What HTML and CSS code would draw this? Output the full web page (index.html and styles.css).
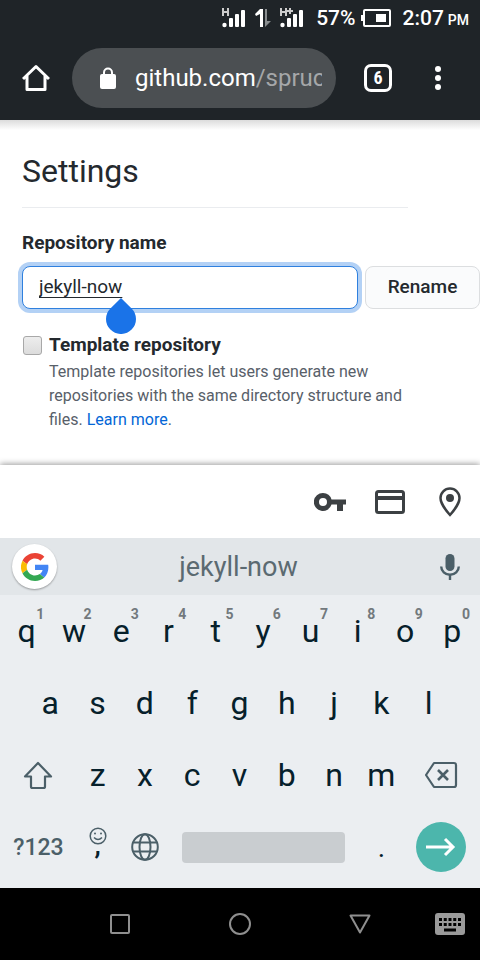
FILE: index.html
```html
<!DOCTYPE html>
<html lang="en">
<head>
<meta charset="utf-8">
<meta name="viewport" content="width=device-width, initial-scale=1">
<title>Settings</title>
<link rel="stylesheet" href="styles.css">
</head>
<body>
<div class="status">
  <svg width="24" height="20" viewBox="0 0 24 20" fill="#fff"><path d="M0 0h2v3h3V0h2v8H5V5H2v3H0z" fill="#ccc"/><circle cx="2.500" cy="17" r="2.200"/><rect x="7" y="10" width="4" height="9" rx="1"/><rect x="13" y="6" width="4" height="13" rx="1"/><rect x="19" y="2" width="4" height="17" rx="1"/></svg>
  <svg class="traffic" width="18" height="20" viewBox="0 0 18 20"><path d="M1 6 6 1h3v18H6V6L2 8z" fill="#fff"/><path d="M11 1h2v12h4l-6 6z" fill="#888c8e"/></svg>
  <svg width="24" height="20" viewBox="0 0 24 20" fill="#fff"><path d="M0 0h2v3h3V0h2v8H5V5H2v3H0zM9 0h2v2h2v2h-2v2H9V4H7V2h2z" fill="#ccc"/><circle cx="2.500" cy="17" r="2.200"/><rect x="7" y="10" width="4" height="9" rx="1"/><rect x="13" y="6" width="4" height="13" rx="1"/><rect x="19" y="2" width="4" height="17" rx="1"/></svg>
  <span class="percent">57%</span>
  <svg class="battery" width="30" height="18" viewBox="0 0 30 18" fill="none"><rect x="3" y="1" width="26" height="16" rx="1" stroke="#fff" stroke-width="2"/><path d="M0 6h2v6H0z" fill="#fff"/><rect x="15" y="5" width="10" height="8" fill="#fff"/></svg>
  <span class="time">2:07</span><span class="pm">PM</span>
</div>
<header class="toolbar">
  <button class="tool home" aria-label="Home"><svg width="28" height="28" viewBox="0 0 28 28" fill="none" stroke="#fff" stroke-width="3" stroke-linejoin="round"><path d="M1 15 14 2.500 27 15M5 12v13.500h18V12"/></svg></button>
  <div class="omnibox">
    <svg width="16" height="22" viewBox="0 0 16 22"><path d="M4 9V5.500a4 4 0 0 1 8 0V9" fill="none" stroke="#fff" stroke-width="2"/><rect y="7" width="16" height="15" rx="2" fill="#fff"/></svg>
    <a class="url" href="#">github.com<span class="path">/spruc</span></a>
  </div>
  <button class="tool tabs" aria-label="Tabs"><span class="count">6</span></button>
  <button class="tool more" aria-label="More"><svg width="6" height="24" viewBox="0 0 6 24" fill="#fff"><circle cx="3" cy="3" r="3"/><circle cx="3" cy="12" r="3"/><circle cx="3" cy="21" r="3"/></svg></button>
</header>
<main class="page">
  <h1>Settings</h1>
  <form>
    <label class="name-label" for="name">Repository name</label>
    <div class="rename">
      <div class="field">
        <input id="name" type="text" value="jekyll-now" spellcheck="false">
        <svg class="handle" width="30" height="36" viewBox="0 0 30 36"><path d="M15 0 25.600 10.400a15 15 0 1 1-21.200 0z" fill="#1a73e8"/></svg>
      </div>
      <button class="submit" type="button">Rename</button>
    </div>
    <div class="template">
      <input id="template" type="checkbox">
      <div>
        <label for="template">Template repository</label>
        <p>Template repositories let users generate new repositories with the same directory structure and files. <a href="#">Learn more</a>.</p>
      </div>
    </div>
  </form>
</main>
<div class="autofill">
  <button aria-label="Passwords"><svg width="32" height="20" viewBox="0 0 32 20"><path fill="#3c4043" fill-rule="evenodd" d="M9 1a9 9 0 0 1 8.500 6.500H32v5h-3V19h-6v-6.500h-5.500A9 9 0 1 1 9 1zm0 5a4 4 0 1 0 0 8 4 4 0 0 0 0-8z"/></svg></button>
  <button aria-label="Payment methods"><svg width="30" height="24" viewBox="0 0 30 24"><rect x="1.500" y="1.500" width="27" height="21" rx="2" fill="none" stroke="#3c4043" stroke-width="3"/><path d="M1 6h28v4H1z" fill="#3c4043"/></svg></button>
  <button aria-label="Addresses"><svg width="22" height="30" viewBox="0 0 22 30"><path d="M11 1.500A9.500 9.500 0 0 0 1.500 11c0 6.500 9.500 17 9.500 17s9.500-10.500 9.500-17A9.500 9.500 0 0 0 11 1.500z" fill="none" stroke="#3c4043" stroke-width="2.500"/><circle cx="11" cy="11" r="4" fill="#3c4043"/></svg></button>
</div>
<section class="keyboard">
  <div class="strip">
    <button class="google" aria-label="Google"><svg width="28" height="28" viewBox="0 0 48 48"><path fill="#ea4335" d="M24 9.500c3.540 0 6.710 1.220 9.210 3.600l6.850-6.850C35.900 2.380 30.470 0 24 0 14.620 0 6.510 5.380 2.560 13.220l7.980 6.190C12.430 13.720 17.740 9.500 24 9.500z"/><path fill="#4285f4" d="M46.980 24.550c0-1.570-.15-3.090-.38-4.550H24v9.020h12.940c-.58 2.960-2.260 5.480-4.780 7.180l7.730 6c4.510-4.180 7.090-10.360 7.090-17.650z"/><path fill="#fbbc05" d="M10.530 28.590a14.500 14.500 0 0 1 0-9.180l-7.980-6.190a24 24 0 0 0 0 21.560l7.980-6.190z"/><path fill="#34a853" d="M24 48c6.480 0 11.930-2.130 15.890-5.810l-7.730-6c-2.150 1.450-4.920 2.300-8.160 2.300-6.260 0-11.570-4.220-13.470-9.910l-7.980 6.190C6.510 42.620 14.620 48 24 48z"/></svg></button>
    <button class="suggestion">jekyll-now</button>
    <button class="mic" aria-label="Voice input"><svg width="20" height="28" viewBox="0 0 20 28"><rect x="5.500" y="1" width="9" height="17" rx="4.500" fill="#4b5f68"/><path d="M1.200 13.500a8.800 8.300 0 0 0 17.600 0M10 21.500V27" fill="none" stroke="#4b5f68" stroke-width="2.400"/></svg></button>
  </div>
  <div class="keys">
    <button class="key">q<sup>1</sup></button><button class="key">w<sup>2</sup></button><button class="key">e<sup>3</sup></button><button class="key">r<sup>4</sup></button><button class="key">t<sup>5</sup></button><button class="key">y<sup>6</sup></button><button class="key">u<sup>7</sup></button><button class="key">i<sup>8</sup></button><button class="key">o<sup>9</sup></button><button class="key">p<sup>0</sup></button>
    <button class="key indent">a</button><button class="key">s</button><button class="key">d</button><button class="key">f</button><button class="key">g</button><button class="key">h</button><button class="key">j</button><button class="key">k</button><button class="key">l</button>
    <button class="key wide" aria-label="Shift"><svg width="30" height="29" viewBox="0 0 30 29"><path d="M15 2 28 15.500h-6V25.500q0 1.500-1.500 1.500h-11Q8 27 8 25.500V15.500H2z" fill="none" stroke="#4b5f68" stroke-width="2.200" stroke-linejoin="round"/></svg></button><button class="key">z</button><button class="key">x</button><button class="key">c</button><button class="key">v</button><button class="key">b</button><button class="key">n</button><button class="key">m</button><button class="key wide" aria-label="Backspace"><svg width="34" height="28" viewBox="0 0 34 28" fill="none" stroke="#4b5f68" stroke-width="2.200" stroke-linejoin="round"><path d="M10 2h20q2 0 2 2v20q0 2-2 2H10L2 14z"/><path d="m14 9 10 10M24 9 14 19" stroke-width="2.600"/></svg></button>
    <button class="key wide symbols">?123</button>
    <button class="key comma" aria-label="Comma, emoji"><svg width="18" height="18" viewBox="0 0 18 18" fill="none" stroke="#4b5f68" stroke-width="1.500"><circle cx="9" cy="9" r="7.800"/><path d="M5 10.500q4 4 8 0"/><circle cx="6" cy="6.500" r="1" fill="#4b5f68" stroke="none"/><circle cx="12" cy="6.500" r="1" fill="#4b5f68" stroke="none"/></svg><span>,</span></button>
    <button class="key" aria-label="Language"><svg width="28" height="28" viewBox="0 0 28 28" fill="none" stroke="#4b5f68" stroke-width="2"><circle cx="14" cy="14" r="12.800"/><ellipse cx="14" cy="14" rx="5.500" ry="12.800"/><path d="M2.500 9.500h23M2.500 18.500h23"/></svg></button>
    <button class="key space" aria-label="Space"><span></span></button>
    <button class="key period">.</button>
    <button class="key wide" aria-label="Go"><span class="go"><svg width="30" height="20" viewBox="0 0 30 20" fill="none" stroke="#fff" stroke-width="3"><path d="M0 10h27M19 2l8 8-8 8"/></svg></span></button>
  </div>
</section>
<nav class="system">
  <button aria-label="Overview"><svg width="20" height="20" viewBox="0 0 20 20"><rect x="1" y="1" width="18" height="18" rx="1"/></svg></button>
  <button aria-label="Home screen"><svg width="22" height="22" viewBox="0 0 22 22"><circle cx="11" cy="11" r="10"/></svg></button>
  <button aria-label="Back"><svg width="22" height="20" viewBox="0 0 22 20"><path d="M1.500 1.500h19L11 18.500z" stroke-linejoin="round"/></svg></button>
  <button class="switch" aria-label="Switch keyboard"><svg width="30" height="22" viewBox="0 0 30 22"><rect width="30" height="22" rx="3" fill="#9a9a9a" stroke="none"/><path d="M4 6.500h22M4 11.500h22" stroke="#000" stroke-width="3" stroke-dasharray="3 1.750"/><path d="M9 17h12" stroke="#000" stroke-width="3"/></svg></button>
</nav>
</body>
</html>
```
FILE: styles.css
```css
* { box-sizing: border-box; }
body {
  margin: 0;
  min-height: 100vh;
  display: flex;
  flex-direction: column;
  background: #fff;
  color: #24292e;
  font-family: Roboto, "Liberation Sans", sans-serif;
}
button {
  margin: 0;
  padding: 0;
  border: 0;
  background: none;
  color: inherit;
  font: inherit;
}
svg { display: block; flex: none; }

.status {
  height: 36px;
  padding-right: 11px;
  display: flex;
  align-items: center;
  justify-content: flex-end;
  background: #1f2428;
  color: #fff;
  font-size: 21px;
  font-weight: 500;
}
.traffic { margin: 0 8px; }
.percent { margin: 0 6px 0 12px; }
.time { margin-left: 11px; }
.pm { margin: 4px 0 0 4px; font-size: 14px; }

.toolbar {
  height: 84px;
  display: flex;
  align-items: center;
  background: #1f2428;
  color: #fff;
}
.tool { display: flex; align-items: center; justify-content: center; }
.home { width: 72px; }
.omnibox {
  flex: 1;
  min-width: 0;
  height: 60px;
  padding: 0 14px 0 28px;
  display: flex;
  align-items: center;
  gap: 19px;
  border-radius: 30px;
  background: #4b4f52;
}
.url {
  flex: 1;
  overflow: hidden;
  white-space: nowrap;
  color: #fff;
  font-size: 24px;
  line-height: 32px;
  text-decoration: none;
}
.path { color: #a5a7a9; }
.tabs { width: 84px; }
.count {
  width: 28px;
  height: 28px;
  border: 3px solid #fff;
  border-radius: 7px;
  font-family: "Roboto Condensed", "Liberation Sans Narrow", Roboto, sans-serif;
  font-size: 18px;
  font-weight: 700;
  line-height: 22px;
}
.more { width: 36px; margin-right: 24px; }

.page {
  flex: 1;
  padding: 28px 0 32px 22px;
  background: linear-gradient(#dcdcdc, #fff 10px);
}
h1 {
  margin: 0 72px 24px 0;
  padding-bottom: 12px;
  border-bottom: 1px solid #eaecef;
  font-size: 32px;
  font-weight: 400;
  line-height: 47px;
}
.name-label {
  display: block;
  margin-bottom: 12px;
  font-size: 19px;
  font-weight: 700;
  line-height: 22px;
}
.rename { display: flex; gap: 7px; }
.field { position: relative; flex: 1; min-width: 0; }
.field input {
  display: block;
  width: 100%;
  height: 43px;
  padding: 0 16px 2px;
  border: 1px solid #2f80de;
  border-radius: 8px;
  outline: 0;
  box-shadow: 0 0 0 4px #b3d1f5;
  background: #fff;
  color: #24292e;
  font: 400 19px Roboto, "Liberation Sans", sans-serif;
  text-decoration: underline 1px;
  text-decoration-skip-ink: none;
  text-underline-offset: 4px;
}
.handle { position: absolute; left: 84px; top: 32px; }
.submit {
  width: 115px;
  height: 43px;
  padding-bottom: 2px;
  border: 1px solid #dcdee0;
  border-radius: 8px;
  background: #fafbfc;
  font-size: 19px;
  font-weight: 500;
}
.template { margin-top: 24px; display: flex; gap: 7px; }
.template input {
  appearance: none;
  flex: none;
  width: 19px;
  height: 19px;
  margin: 3px 0 0 1px;
  border: 1px solid #a8a8a8;
  border-radius: 3px;
  background: linear-gradient(#ededed, #dcdcdc);
}
.template label { display: block; font-size: 19px; font-weight: 700; line-height: 24px; }
.template p {
  max-width: 372px;
  margin: 3px 0 0;
  color: #586069;
  font-size: 16px;
  line-height: 24px;
}
.template a { color: #0366d6; text-decoration: none; }

.autofill {
  height: 73px;
  display: flex;
  align-items: center;
  justify-content: flex-end;
  background: #fff;
  box-shadow: 0 -1px 6px #0006;
}
.autofill button { width: 60px; display: flex; justify-content: center; }

.keyboard { position: relative; background: #ebeef1; color: #06202b; }
.strip {
  height: 57px;
  display: grid;
  grid-template-columns: 57px 1fr 60px;
  align-items: center;
  background: #e2e6e9;
}
.google {
  width: 45px;
  height: 45px;
  margin-left: 12px;
  display: flex;
  align-items: center;
  justify-content: center;
  border-radius: 50%;
  background: #fff;
  box-shadow: 0 1px 2px #0005;
}
.suggestion { color: #5b6a71; font-size: 27px; }
.mic { display: flex; justify-content: center; }
.keys {
  padding: 0 4px 5px 3px;
  display: grid;
  grid-template-columns: repeat(20, 1fr);
  grid-auto-rows: 72px;
}
.key {
  grid-column: span 2;
  position: relative;
  display: flex;
  align-items: center;
  justify-content: center;
  font-size: 32px;
}
.indent { grid-column: 2 / span 2; }
.wide { grid-column: span 3; }
.space { grid-column: span 8; }
.key sup {
  position: absolute;
  top: 11px;
  right: 6px;
  color: #72797d;
  font-size: 14px;
  font-weight: 700;
  line-height: 16px;
}
.symbols { color: #4b5f68; font-size: 23px; font-weight: 500; }
.comma { flex-direction: column; justify-content: flex-start; padding-top: 16px; }
.comma span { margin-top: -12px; font-weight: 500; font-size: 28px; line-height: 24px; }
.space span {
  flex: 1;
  height: 31px;
  margin: 0 13px;
  border-radius: 4px;
  background: #c9cdd0;
}
.period { font-size: 28px; }
.go {
  width: 50px;
  height: 50px;
  display: flex;
  align-items: center;
  justify-content: center;
  border-radius: 50%;
  background: #4cb6ac;
}

.system {
  height: 72px;
  display: grid;
  grid-template-columns: 1fr 2fr 2fr 2fr 1fr;
  background: #000;
}
.system button { display: flex; align-items: center; justify-content: center; }
.system button:first-child { grid-column: 2; }
.system svg { fill: none; stroke: #8f8f8f; stroke-width: 2; }
```
